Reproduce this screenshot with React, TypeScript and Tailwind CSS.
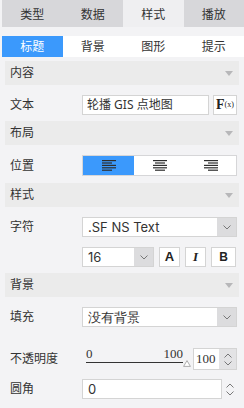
import type { ReactNode } from "react";

const topTabs = ["类型", "数据", "样式", "播放"];
const subTabs = ["标题", "背景", "图形", "提示"];

function SectionHeader({ title, first }: { title: string; first?: boolean }) {
  return (
    <div
      className={`mx-[5px] flex h-[24px] items-center justify-between bg-[#ebebeb] pl-[5px] pr-[6px] ${
        first ? "mt-[4px]" : ""
      }`}
    >
      <span>{title}</span>
      <svg width="8" height="5" viewBox="0 0 8 5">
        <path d="M0 0H8L4 5Z" fill="#b7b7b9" />
      </svg>
    </div>
  );
}

function Row({ label, children }: { label: string; children: ReactNode }) {
  return (
    <div className="flex items-center">
      <span className="w-[72px] shrink-0">{label}</span>
      <div className="flex flex-1 items-center">{children}</div>
    </div>
  );
}

function Chevron({ up }: { up?: boolean }) {
  return (
    <svg width="8" height="5" viewBox="0 0 8 5">
      <path
        d={up ? "M0.5 4.5L4 1L7.5 4.5" : "M0.5 0.5L4 4L7.5 0.5"}
        fill="none"
        stroke="#6b6b6b"
        strokeWidth="0.9"
      />
    </svg>
  );
}

function Select({ value, className }: { value: string; className?: string }) {
  return (
    <div className={`flex h-[20px] border border-[#d4d4d4] bg-white ${className ?? ""}`}>
      <span className="flex-1 pl-[5px] font-['Inter',sans-serif] text-[13px] leading-[18px]">
        {value}
      </span>
      <span className="flex w-[19px] items-center justify-center bg-[#dcdcde]">
        <Chevron />
      </span>
    </div>
  );
}

function Spinner() {
  return (
    <span className="flex h-full w-[17px] flex-col items-center justify-center gap-[3px] bg-[#e3e3e5]">
      <Chevron up />
      <Chevron />
    </span>
  );
}

function AlignIcon({ align }: { align: "left" | "center" | "right" }) {
  const widths = [14, 10, 14, 14, 10];
  return (
    <svg width="14" height="11" viewBox="0 0 14 11">
      {widths.map((w, i) => {
        const x = align === "left" ? 0 : align === "center" ? (14 - w) / 2 : 14 - w;
        return <rect key={i} x={x} y={i * 2.4} width={w} height="1.2" fill="#2e2e2e" />;
      })}
    </svg>
  );
}

export default function App() {
  return (
    <div className="h-[408px] w-[244px] overflow-hidden bg-[#f3f3f5] font-['Noto_Sans','Noto_Sans_CJK_SC',sans-serif] text-[12px] text-[#333]">
      <div className="flex h-[27px] pl-[2px]">
        {topTabs.map((tab, i) => (
          <div
            key={tab}
            className={`flex flex-1 items-center justify-center pt-[2px] ${
              i === 2 ? "bg-[#efeff1]" : "bg-[#d7d7da]"
            }`}
          >
            {tab}
          </div>
        ))}
      </div>

      <div className="ml-[2px] mt-[9px] flex h-[21px] bg-white">
        {subTabs.map((tab, i) => (
          <div
            key={tab}
            className={`flex flex-1 items-center justify-center ${
              i === 0 ? "bg-[#3b99fc] text-white" : ""
            }`}
          >
            {tab}
          </div>
        ))}
      </div>

      <SectionHeader title="内容" first />
      <div className="pb-[6px] pl-[10px] pr-[7px] pt-[10px]">
        <Row label="文本">
          <div className="h-[20px] w-[127px] border border-[#d4d4d4] bg-white pl-[4px] leading-[18px]">
            轮播 GIS 点地图
          </div>
          <div className="ml-auto flex h-[20px] w-[24px] items-center justify-center border border-[#d4d4d4] bg-white font-['Liberation_Serif',serif] text-[#222]">
            <span className="text-[14px] font-bold leading-none">F</span>
            <span className="text-[8px] leading-none">(x)</span>
          </div>
        </Row>
      </div>

      <SectionHeader title="布局" />
      <div className="pb-[7px] pl-[10px] pr-[7px] pt-[10px]">
        <Row label="位置">
          <div className="flex h-[21px] flex-1 border border-[#d6d6d8] bg-white">
            <span className="flex flex-1 items-center justify-center bg-[#3b99fc]">
              <AlignIcon align="left" />
            </span>
            <span className="flex flex-1 items-center justify-center">
              <AlignIcon align="center" />
            </span>
            <span className="flex flex-1 items-center justify-center">
              <AlignIcon align="right" />
            </span>
          </div>
        </Row>
      </div>

      <SectionHeader title="样式" />
      <div className="flex flex-col gap-[10px] pb-[6px] pl-[10px] pr-[7px] pt-[10px]">
        <Row label="字符">
          <Select value=".SF NS Text" className="flex-1" />
        </Row>
        <Row label="">
          <Select value="16" className="w-[72px]" />
          <div className="ml-[5px] flex gap-[5px]">
            <span className="flex h-[20px] w-[21px] items-center justify-center border border-[#d4d4d4] bg-white font-['Liberation_Sans',sans-serif] text-[13px] font-bold text-[#222]">
              A
            </span>
            <span className="flex h-[20px] w-[21px] items-center justify-center border border-[#d4d4d4] bg-white font-['Liberation_Serif',serif] text-[13px] font-bold italic text-[#222]">
              I
            </span>
            <span className="flex h-[20px] w-[25px] items-center justify-center border border-[#d4d4d4] bg-white font-['Liberation_Sans',sans-serif] text-[12px] font-bold text-[#222]">
              B
            </span>
          </div>
        </Row>
      </div>

      <SectionHeader title="背景" />
      <div className="flex flex-col pl-[10px] pr-[7px] pt-[10px]">
        <Row label="填充">
          <Select value="没有背景" className="flex-1" />
        </Row>
        <div className="mt-[21px]">
          <Row label="不透明度">
            <div className="relative ml-[4px] flex h-[22px] w-[97px] flex-col justify-end pb-[7px] font-['Liberation_Serif',serif] text-[13px]">
              <div className="mb-[2px] flex h-[12px] justify-between leading-[12px]">
                <span>0</span>
                <span>100</span>
              </div>
              <div className="h-px shrink-0 bg-[#333]" />
              <svg
                className="absolute bottom-[3px] right-[-8px]"
                width="8"
                height="7"
                viewBox="0 0 8 7"
              >
                <path d="M4 0.6L7.4 6.4H0.6Z" fill="white" stroke="#9a9a9a" strokeWidth="0.8" />
              </svg>
            </div>
            <div className="ml-auto flex h-[22px] w-[44px] border border-[#d4d4d4] bg-white">
              <span className="flex-1 pl-[2px] font-['Liberation_Serif',serif] text-[13px] leading-[20px]">
                100
              </span>
              <Spinner />
            </div>
          </Row>
        </div>
        <div className="mt-[9px]">
          <Row label="圆角">
            <div className="flex h-[20px] flex-1">
              <span className="flex-1 border border-[#d4d4d4] bg-white pl-[5px] font-['Inter',sans-serif] text-[13px] leading-[18px]">
                0
              </span>
              <span className="flex h-full w-[15px] flex-col items-center justify-center gap-[3px]">
                <Chevron up />
                <Chevron />
              </span>
            </div>
          </Row>
        </div>
      </div>
    </div>
  );
}
